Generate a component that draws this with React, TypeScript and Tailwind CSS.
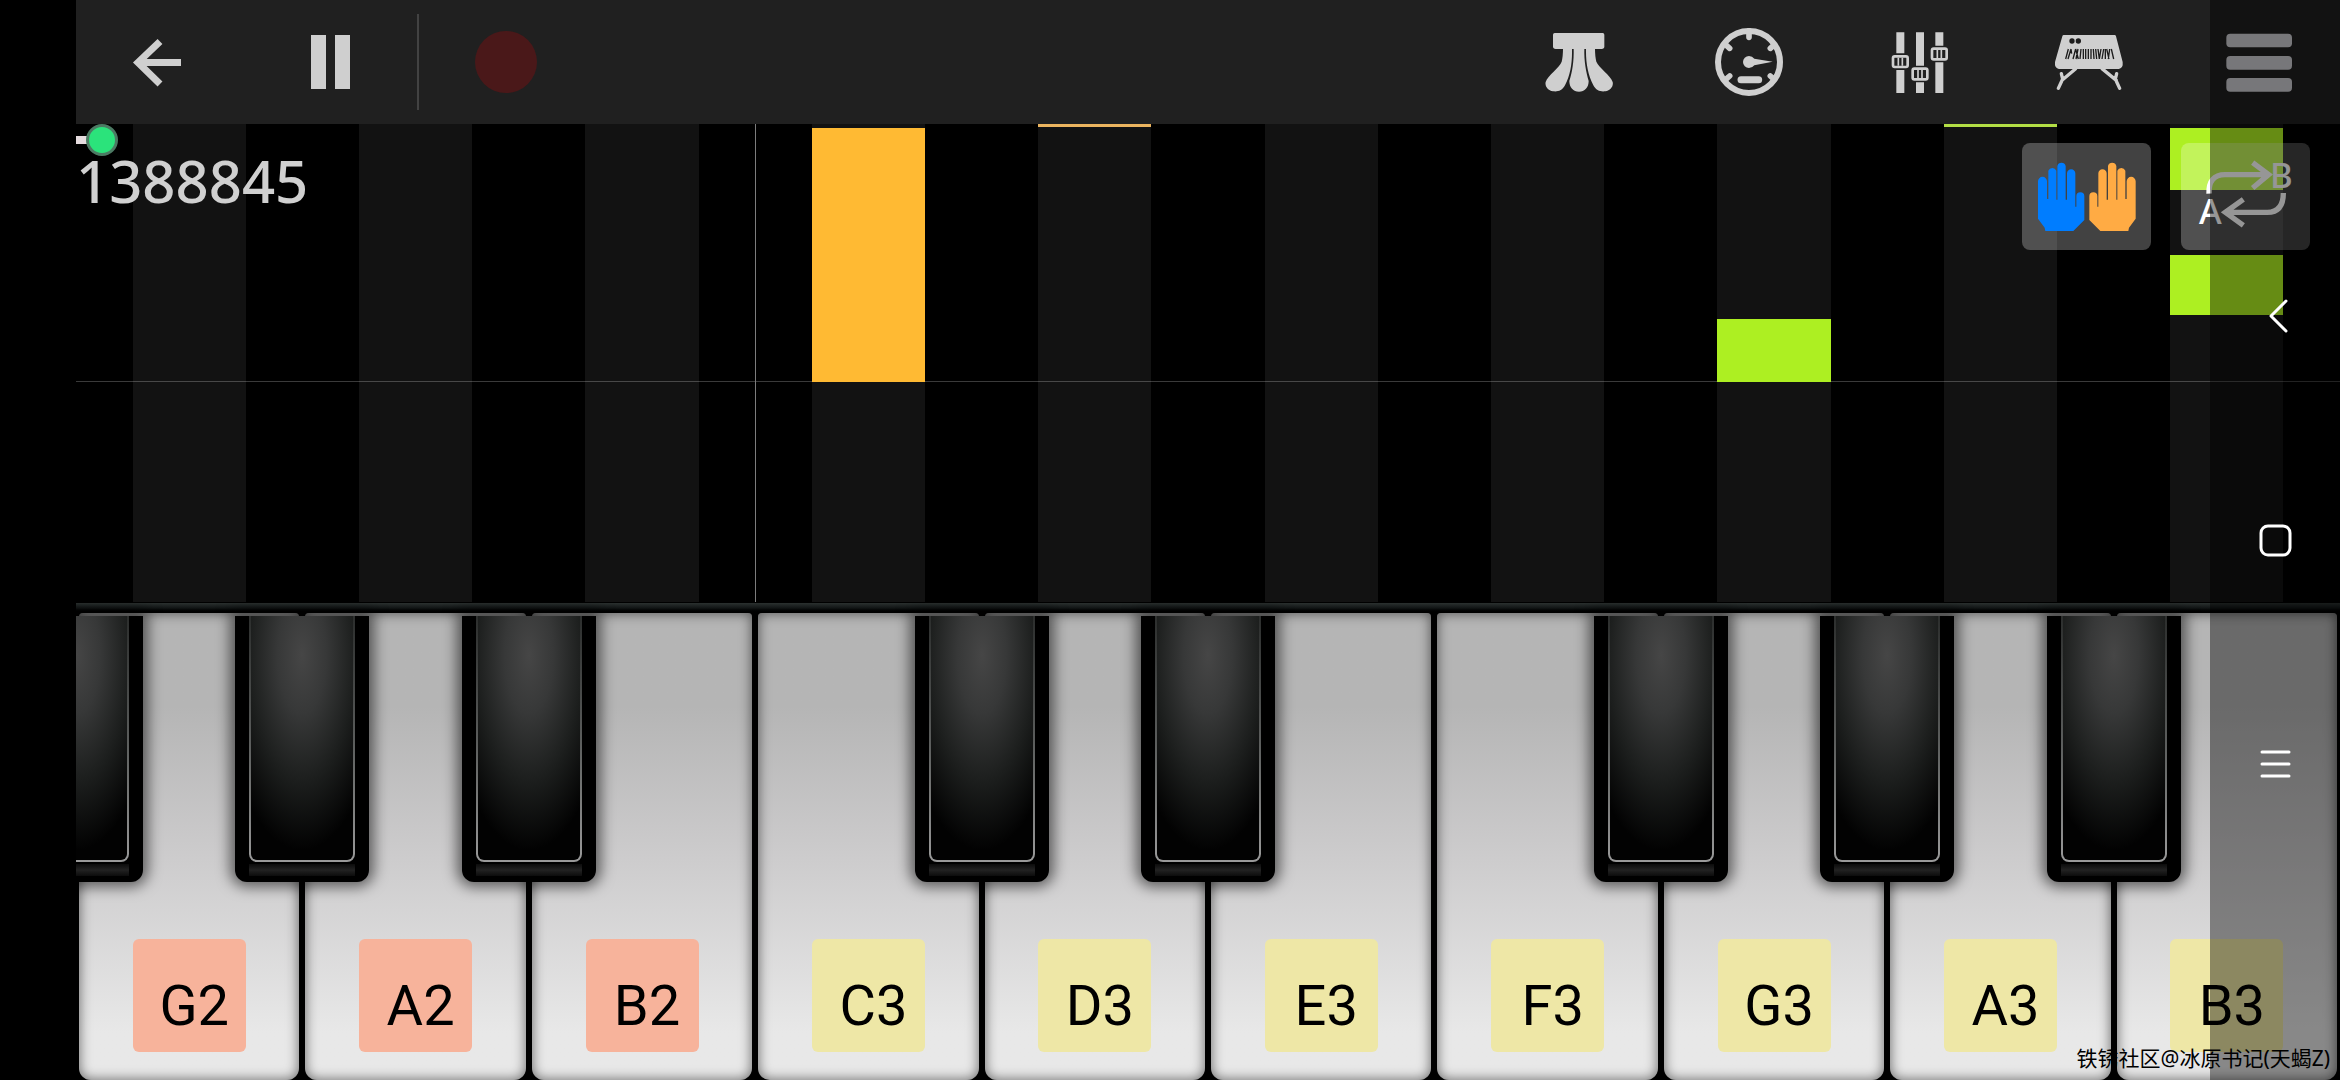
import React from "react";

type Note = { spacing: string; color: string };
type PianoKey = { name: string; sharpBefore: boolean; octaveStart?: boolean; tag: string; notes: Note[] };

const CORAL = "bg-[#f7b39b]";
const YELLOW = "bg-[#eee7a6]";

const keys: PianoKey[] = [
  { name: "G2", sharpBefore: true, tag: CORAL, notes: [] },
  { name: "A2", sharpBefore: true, tag: CORAL, notes: [] },
  { name: "B2", sharpBefore: true, tag: CORAL, notes: [] },
  { name: "C3", sharpBefore: false, octaveStart: true, tag: YELLOW, notes: [{ spacing: "mt-1 h-[254px]", color: "bg-[#ffba33]" }] },
  { name: "D3", sharpBefore: true, tag: YELLOW, notes: [{ spacing: "h-[3px]", color: "bg-[#ebb45f]" }] },
  { name: "E3", sharpBefore: true, tag: YELLOW, notes: [] },
  { name: "F3", sharpBefore: false, tag: YELLOW, notes: [] },
  { name: "G3", sharpBefore: true, tag: YELLOW, notes: [{ spacing: "mt-[195px] h-[63px]", color: "bg-[#adef22]" }] },
  { name: "A3", sharpBefore: true, tag: YELLOW, notes: [{ spacing: "h-[3px]", color: "bg-[#b3de45]" }] },
  {
    name: "B3",
    sharpBefore: true,
    tag: YELLOW,
    notes: [
      { spacing: "mt-1 h-[62px]", color: "bg-[#adef22]" },
      { spacing: "mt-[65px] h-[60px]", color: "bg-[#adef22]" },
    ],
  },
];

const BackIcon = () => (
  <svg viewBox="124 28 68 68" className="size-17" fill="none" stroke="#cfcfcf" strokeWidth="7">
    <path d="M181 62.500H138M160 41.500L138 62.500L160 84" />
  </svg>
);

const PauseIcon = () => (
  <svg viewBox="296 28 68 68" className="size-17" fill="#cfcfcf">
    <path d="M311 35h15v54h-15zM335 35h15v54h-15z" />
  </svg>
);

const RecordIcon = () => (
  <svg viewBox="0 0 68 68" className="size-17">
    <circle cx="34" cy="34" r="31" fill="#4a1819" />
  </svg>
);

const PedalIcon = () => (
  <svg viewBox="136 84 204 204" className="size-17" fill="#cfcfcf">
    <path d="M165 99H309Q314 99 314 104V139Q314 147 306 147H168Q160 147 160 139V104Q160 99 165 99Z" />
    <path d="M190 145H217C218 190 212 225 196 256C188 272 174 276 160 274C144 272 135 258 138 246C144 226 180 203 186 185Q190 170 190 145Z" />
    <path d="M286 145H259C258 190 265 225 281 256C289 272 303 276 317 274C333 272 342 258 339 246C333 226 297 203 290 185Q286 170 286 145Z" />
    <path d="M222 145H254C253 185 259 215 267 243C267 263 255 275 238 275C221 275 209 263 209 243C218 215 223 185 222 145Z" />
  </svg>
);

const TempoIcon = () => (
  <svg viewBox="645 84 204 204" className="size-17" fill="none" stroke="#cfcfcf">
    <circle cx="747" cy="186" r="93" strokeWidth="18" />
    <g strokeWidth="17" strokeLinecap="round">
      <path d="M747 92V112M680 137L689 145M820 137L811 145M680 236L689 228M820 236L811 228" />
    </g>
    <path d="M723 239H776" strokeWidth="21" strokeLinecap="round" />
    <path d="M747 168Q757 168 763 176L818 185L763 196Q757 204 747 204A18 18 0 0 1 747 168Z" fill="#cfcfcf" stroke="none" />
  </svg>
);

const Fader = ({ x, y }: { x: number; y: number }) => (
  <g>
    <path d={`M${x - 12} 37h24V${y - 25}h-24zM${x - 12} ${y + 25}h24V219h-24z`} fill="#cfcfcf" />
    <rect x={x - 22} y={y - 16} width="44" height="32" rx="5" fill="none" stroke="#cfcfcf" strokeWidth="8" />
    <path d={`M${x - 6} ${y - 12}v24M${x + 6} ${y - 12}v24`} stroke="#cfcfcf" strokeWidth="5" />
  </g>
);

const MixerIcon = () => (
  <svg viewBox="12 24 204 204" className="size-17">
    <Fader x={58} y={125} />
    <Fader x={117} y={162} />
    <Fader x={175} y={102} />
  </svg>
);

const KeyboardIcon = () => (
  <svg viewBox="30 9 204 204" className="size-17">
    <path d="M56 30H209Q212 30 213 34L233 111V121Q230 131 221 132H42Q33 131 30 121V111L52 34Q53 30 56 30Z" fill="#cfcfcf" />
    <circle cx="81" cy="48" r="8" fill="#1d1d1d" />
    <circle cx="100" cy="48" r="8" fill="#1d1d1d" />
    <path
      d="M70 72L62 102M78 72L69 102M78 72L80 86M92 72L84 102M99 72L93 102M92 72L100 102M108 72L105 102M115 72V102M122 72V102M130 72V102M138 72V102M145 72L147 102M152 72L155 102M159 72L163 102M168 72L163 102M176 72L171 102M181 72V102M185 72L192 102M194 72L190 102M199 72L206 102"
      stroke="#1d1d1d"
      strokeWidth="4"
      fill="none"
    />
    <path d="M92 131L51 166M49 146L53 162L40 190M171 131L214 166M215 146L211 162L224 190" stroke="#cfcfcf" strokeWidth="10" strokeLinecap="round" fill="none" />
  </svg>
);

const MenuIcon = () => (
  <svg viewBox="915 84 204 204" className="size-17" fill="#cbcbd0">
    <rect x="919" y="101" width="197" height="41" rx="12" />
    <rect x="919" y="168" width="197" height="41" rx="12" />
    <rect x="919" y="234" width="197" height="41" rx="12" />
  </svg>
);

const HAND =
  "M354 543A13 13 0 0 1 381 543V596H385V511A13 13 0 0 1 409 511V598H412V497A13 13 0 0 1 437 497V598H441V519A12.500 12.500 0 0 1 466 519V619H469V588A12 12 0 0 1 493 588V659L460 692H376L374 682L354 655Z";

const HandsIcon = () => (
  <svg viewBox="306 428 387 321" className="h-[107px] w-[129px]">
    <path d={HAND} fill="#007dff" />
    <path d={HAND} fill="#ffab44" transform="translate(1001 0) scale(-1 1)" />
  </svg>
);

const LoopIcon = () => (
  <svg viewBox="783 427 387 321" className="h-[107px] w-[129px]">
    <g fill="none" stroke="#fff" strokeWidth="16">
      <path d="M867 579Q865 522 915 522H1046M998 486L1046 522L998 562" />
      <path d="M1090 577Q1090 635 1042 635H916M970 596L916 635L970 674" />
    </g>
    <g fill="#fff" fontFamily="'Noto Sans', sans-serif" fontSize="104" fontWeight="500">
      <text x="837" y="670">A</text>
      <text x="1050" y="561">B</text>
    </g>
  </svg>
);

const ToolButton = ({ label, children }: { label: string; children: React.ReactNode }) => (
  <button type="button" aria-label={label} className="shrink-0">
    {children}
  </button>
);

const Toolbar = () => (
  <header className="flex h-[124px] shrink-0 items-center justify-between bg-[#202020] pr-[47px] pl-12">
    <div className="flex items-center">
      <ToolButton label="Back"><BackIcon /></ToolButton>
      <div className="w-26" />
      <ToolButton label="Pause"><PauseIcon /></ToolButton>
      <div className="mx-[53px] h-24 w-[2px] bg-[#424242]" />
      <ToolButton label="Record"><RecordIcon /></ToolButton>
    </div>
    <div className="flex items-center gap-[102px]">
      <ToolButton label="Pedals"><PedalIcon /></ToolButton>
      <ToolButton label="Tempo"><TempoIcon /></ToolButton>
      <ToolButton label="Mixer"><MixerIcon /></ToolButton>
      <ToolButton label="Instrument"><KeyboardIcon /></ToolButton>
      <ToolButton label="Menu"><MenuIcon /></ToolButton>
    </div>
  </header>
);

const NoteRoll = () => (
  <section className="relative flex min-h-[478px] flex-1 overflow-hidden bg-black">
    <div className="absolute inset-x-0 top-[257px] h-px bg-[#3a3a3a]" />
    {keys.map((key) => (
      <div key={key.name} className="relative flex flex-1 justify-center">
        {key.octaveStart && <div className="absolute inset-y-0 left-0 w-px bg-[#7c7c7c]" />}
        <div className="w-1/2 bg-white/7">
          {key.notes.map((note, i) => (
            <div key={i} className={`relative ${note.spacing} ${note.color}`} />
          ))}
        </div>
      </div>
    ))}

    <div className="absolute top-0 left-0">
      <div className="flex h-8 items-center">
        <div className="h-2 w-3.5 bg-[#e6dcdf]" />
        <div className="-ml-1 size-8 rounded-full border-3 border-[#4c7a63] bg-[#2be37b]" />
      </div>
      <p className="-mt-1 font-['Noto_Sans',sans-serif] text-[58px] leading-[58px] font-medium text-[#d0d0d0]">1388845</p>
    </div>

    <div className="absolute top-[19px] right-[30px] flex gap-[30px]">
      <button type="button" aria-label="Hands" className="rounded-lg bg-white/26">
        <HandsIcon />
      </button>
      <button type="button" aria-label="Loop A to B" className="rounded-lg bg-white/26">
        <LoopIcon />
      </button>
    </div>
  </section>
);

const SharpKey = ({ label }: { label: string }) => (
  <button
    type="button"
    aria-label={label}
    className="absolute top-[3px] left-0 z-10 flex h-[266px] w-[134px] -translate-x-1/2 flex-col rounded-b-xl bg-black px-3.5 pb-1.5 shadow-[0_0_14px_5px_rgba(0,0,0,0.55)]"
  >
    <span className="block w-full flex-1 rounded-b-lg bg-linear-to-b from-[#2c2e2d] via-[#5a5c5b] to-[#9a9a9a] px-[2px] pb-[2px]">
      <span className="block h-full w-full rounded-b-md bg-[radial-gradient(ellipse_80%_80%_at_50%_16%,#464646_0%,#373838_30%,#1c1e1d_65%,#020202_100%)]" />
    </span>
    <span className="mt-0.5 block h-3 w-full bg-linear-to-b from-[#0c0c0c] via-[#222] to-[#0c0c0c]" />
  </button>
);

const Piano = () => (
  <section className="relative h-[478px] shrink-0 overflow-hidden bg-black">
    <div className="h-[11px] border-t border-black bg-linear-to-b from-[#2b3130] via-[#121616] to-black" />
    <div className="flex h-[467px]">
      {keys.map((key) => (
        <div key={key.name} className="relative flex-1">
          {key.sharpBefore && <SharpKey label={`Sharp below ${key.name}`} />}
          <div className="h-full px-[3px]">
            <button
              type="button"
              className="flex h-full w-full items-end justify-center rounded-t-sm rounded-b-xl bg-linear-to-b from-[#b5b5b5] from-20% via-[#cbcacb] via-50% to-[#e8e8e8] to-90% pb-7 shadow-[inset_0_0_12px_1px_rgba(0,0,0,0.5)]"
            >
              <span
                className={`flex size-[113px] items-center justify-center rounded-md pt-5 pl-2.5 font-[Roboto,sans-serif] text-[56px] leading-none text-black ${key.tag}`}
              >
                {key.name}
              </span>
            </button>
          </div>
        </div>
      ))}
    </div>
  </section>
);

const SystemNav = () => (
  <nav className="absolute inset-y-0 right-0 z-20 flex w-[130px] flex-col items-center justify-center gap-40 bg-black/41">
    <button type="button" aria-label="System back">
      <svg viewBox="0 0 64 64" className="size-16" fill="none" stroke="#fff" strokeWidth="3" strokeLinecap="round" strokeLinejoin="round">
        <path d="M43 17L28 32L43 47" />
      </svg>
    </button>
    <button type="button" aria-label="Home">
      <svg viewBox="0 0 64 64" className="size-16" fill="none" stroke="#fff" strokeWidth="3">
        <rect x="18" y="18" width="29" height="29" rx="7" />
      </svg>
    </button>
    <button type="button" aria-label="Recent apps">
      <svg viewBox="0 0 64 64" className="size-16" stroke="#fff" strokeWidth="3" strokeLinecap="round">
        <path d="M19 20H46M19 32H46M19 44H46" />
      </svg>
    </button>
  </nav>
);

export default function App() {
  return (
    <div className="relative flex min-h-screen flex-col overflow-hidden bg-black pl-19">
      <Toolbar />
      <NoteRoll />
      <Piano />
      <SystemNav />
      <p className="absolute right-2.5 bottom-2 z-30 font-['Noto_Sans','Noto_Sans_CJK_SC',sans-serif] text-[21px] leading-7 text-black">
        铁锈社区@冰原书记(天蝎Z)
      </p>
    </div>
  );
}
